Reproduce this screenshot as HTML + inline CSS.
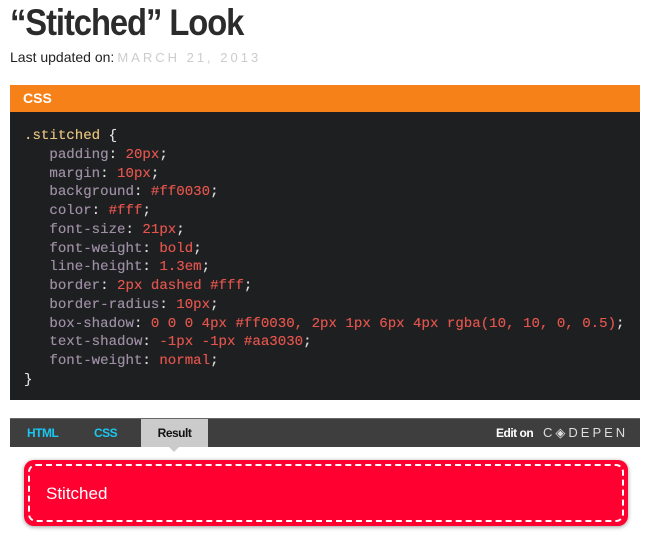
<!DOCTYPE html>
<html><head><style>
body{margin:0;width:650px;height:542px;background:#fff;font-family:"Liberation Sans",sans-serif;position:relative;overflow:hidden}
h1{position:absolute;left:10px;top:2px;margin:0;font-size:37px;font-weight:bold;color:#2b2b2b;letter-spacing:-1.2px;transform:scaleX(0.885);transform-origin:left;}
.upd{position:absolute;left:10px;top:49px;font-size:14px;color:#222}
.upd span{color:#ccc;letter-spacing:3px;font-size:13px;margin-left:3px}
.hd{position:absolute;left:10px;top:85px;width:630px;height:27px;background:#f68119;color:#fff;font-weight:bold;font-size:14px;line-height:27px;text-indent:13px}
.code{position:absolute;left:10px;top:112px;width:630px;height:288px;background:#1d1f21;margin:0;padding:0}
pre{position:absolute;left:24px;top:127px;margin:0;font-family:"Liberation Mono",monospace;font-size:14.1px;line-height:18.75px;color:#ddd;font-weight:normal;text-shadow:0 0 0.4px currentColor}
.s{color:#e5c17c}.p{color:#9d8ea3}.v{color:#e0544c}
.bar{position:absolute;left:10px;top:418px;width:630px;height:28px;background:#3e3e3e;border-top:1px solid #666}
.t{position:absolute;top:0;height:28px;line-height:28px;font-size:12px;font-weight:bold;letter-spacing:-0.5px}
.res{left:131px;width:67px;background:#cbcbcb;color:#111;text-align:center}
.arrow{position:absolute;left:168px;top:446px;border:6px solid transparent;border-top-color:#cbcbcb}
.box{position:absolute;left:24px;top:460px;width:604px;height:66px;background:#ff0030;border-radius:10px;box-shadow:0 1px 4px rgba(0,0,0,.4)}
.box div{position:absolute;left:4px;top:4px;right:4px;bottom:4px;border:2px dashed #fff;border-radius:8px;color:#fff;font-size:17px;line-height:56px;text-indent:16px}
</style></head><body>
<h1>“Stitched” Look</h1>
<div class="upd">Last updated on:<span>MARCH 21, 2013</span></div>
<div class="hd">CSS</div>
<div class="code"></div>
<pre><span class="s">.stitched</span> {
   <span class="p">padding</span>: <span class="v">20px</span>;
   <span class="p">margin</span>: <span class="v">10px</span>;
   <span class="p">background</span>: <span class="v">#ff0030</span>;
   <span class="p">color</span>: <span class="v">#fff</span>;
   <span class="p">font-size</span>: <span class="v">21px</span>;
   <span class="p">font-weight</span>: <span class="v">bold</span>;
   <span class="p">line-height</span>: <span class="v">1.3em</span>;
   <span class="p">border</span>: <span class="v">2px dashed #fff</span>;
   <span class="p">border-radius</span>: <span class="v">10px</span>;
   <span class="p">box-shadow</span>: <span class="v">0 0 0 4px #ff0030, 2px 1px 6px 4px rgba(10, 10, 0, 0.5)</span>;
   <span class="p">text-shadow</span>: <span class="v">-1px -1px #aa3030</span>;
   <span class="p">font-weight</span>: <span class="v">normal</span>;
}</pre>
<div class="bar">
<div class="t" style="left:17px;color:#1ac7ef">HTML</div>
<div class="t" style="left:84px;color:#1ac7ef">CSS</div>
<div class="t res">Result</div>
<div class="t" style="left:486px;color:#fff">Edit on</div>
<div class="t" style="left:533px;color:#ddd;font-weight:normal;letter-spacing:3px;font-size:13px">C◈DEPEN</div>
</div>
<div class="arrow"></div>
<div class="box"><div>Stitched</div></div>
</body></html>
